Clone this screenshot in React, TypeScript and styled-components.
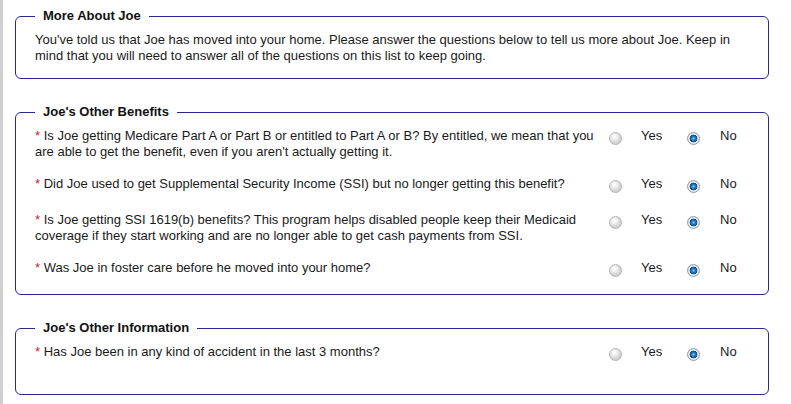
import React from "react";
import styled, { createGlobalStyle } from "styled-components";

const Global = createGlobalStyle`
  html, body { margin: 0; padding: 0; background: #fff; }
  body {
    font-family: "Liberation Sans", Arial, sans-serif;
    font-size: 13px;
    line-height: 16px;
    color: #1a1a1a;
  }
`;

const Page = styled.div`
  border-left: 3px solid #cfcfcf;
  min-height: 404px;
  box-sizing: border-box;
  padding: 8px 22px 0 12px;
`;

const Fieldset = styled.fieldset<{ $bottom?: number }>`
  margin: 0 0 25px 0;
  border: 1px solid #29288c;
  border-radius: 6px;
  padding: 8px 19px ${(p) => p.$bottom ?? 14}px 19px;
  min-width: 0;
`;

const Legend = styled.legend`
  font-weight: bold;
  font-size: 13px;
  line-height: 16px;
  padding: 0 8px;
  color: #111;
`;

const Intro = styled.p`
  margin: 0;
`;

const Rows = styled.div`
  display: flex;
  flex-direction: column;
  gap: 16px;
`;

const Row = styled.div`
  display: flex;
  align-items: flex-start;
`;

const Question = styled.div`
  flex: none;
  width: 571px;
  margin-right: 3px;
`;

const Star = styled.span`
  color: #c0282d;
`;

const Option = styled.label<{ $last?: boolean }>`
  flex: none;
  display: flex;
  align-items: flex-start;
  width: ${(p) => (p.$last ? "auto" : "78px")};
  height: 20px;
`;

const Radio = styled.span<{ $checked?: boolean }>`
  box-sizing: border-box;
  width: 13px;
  height: 13px;
  margin-top: 4px;
  border-radius: 50%;
  border: 1px solid ${(p) => (p.$checked ? "#8f9daa" : "#b4b4b4")};
  background: ${(p) =>
    p.$checked
      ? "radial-gradient(circle at 50% 50%, #7cc0ea 0, #2a78b4 2px, #124f80 3.6px, #eef1f4 4.2px, #d4d9de 6px)"
      : "radial-gradient(circle at 40% 35%, #ffffff 0, #eeeeee 3px, #d2d2d2 6px)"};
  flex: none;
`;

const OptionText = styled.span<{ $gap?: number }>`
  margin-left: ${(p) => p.$gap ?? 19}px;
`;

type Q = { text: string };

const benefits: Q[] = [
  {
    text:
      "Is Joe getting Medicare Part A or Part B or entitled to Part A or B? By entitled, we mean that you are able to get the benefit, even if you aren't actually getting it.",
  },
  {
    text:
      "Did Joe used to get Supplemental Security Income (SSI) but no longer getting this benefit?",
  },
  {
    text:
      "Is Joe getting SSI 1619(b) benefits? This program helps disabled people keep their Medicaid coverage if they start working and are no longer able to get cash payments from SSI.",
  },
  { text: "Was Joe in foster care before he moved into your home?" },
];

const other: Q[] = [
  { text: "Has Joe been in any kind of accident in the last 3 months?" },
];

const QuestionRow: React.FC<{ q: Q }> = ({ q }) => (
  <Row>
    <Question>
      <Star>*</Star> {q.text}
    </Question>
    <Option>
      <Radio />
      <OptionText>Yes</OptionText>
    </Option>
    <Option $last>
      <Radio $checked />
      <OptionText $gap={20}>No</OptionText>
    </Option>
  </Row>
);

export default function App() {
  return (
    <>
      <Global />
      <Page>
        <Fieldset>
          <Legend>More About Joe</Legend>
          <Intro>
            You've told us that Joe has moved into your home. Please answer the
            questions below to tell us more about Joe. Keep in mind that you
            will need to answer all of the questions on this list to keep
            going.
          </Intro>
        </Fieldset>
        <Fieldset>
          <Legend>Joe's Other Benefits</Legend>
          <Rows>
            {benefits.map((q, i) => (
              <QuestionRow key={i} q={q} />
            ))}
          </Rows>
        </Fieldset>
        <Fieldset $bottom={30}>
          <Legend>Joe's Other Information</Legend>
          <Rows>
            {other.map((q, i) => (
              <QuestionRow key={i} q={q} />
            ))}
          </Rows>
        </Fieldset>
      </Page>
    </>
  );
}
